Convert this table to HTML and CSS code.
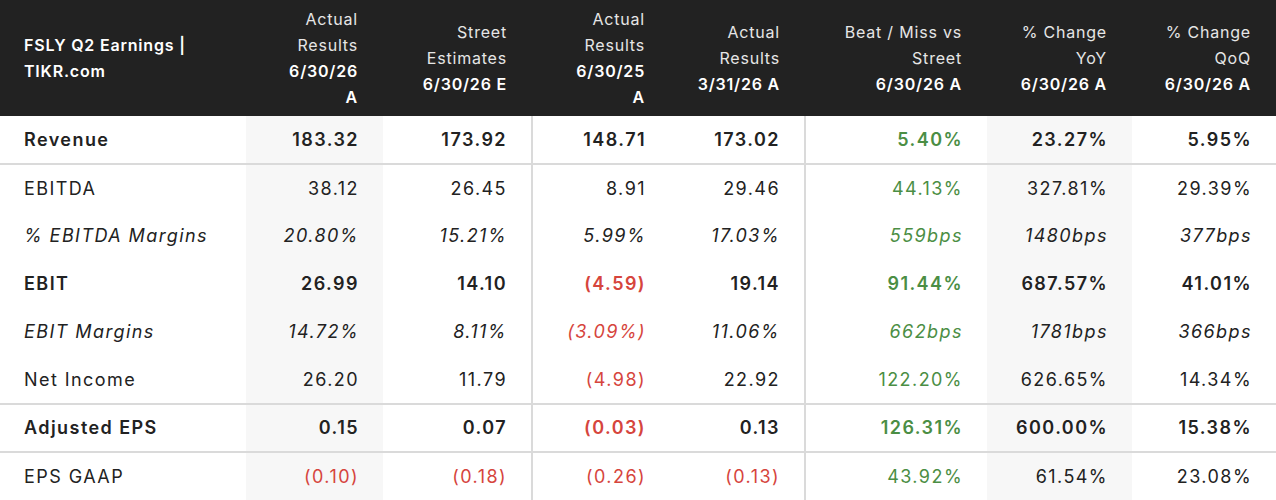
FILE: index.html
```html
<!DOCTYPE html>
<html>
<head>
<meta charset="utf-8">
<link rel="stylesheet" href="styles.css">
</head>
<body>
<table class="earnings">
  <colgroup>
    <col class="c-label">
    <col class="c-1">
    <col class="c-2">
    <col class="c-3">
    <col class="c-4">
    <col class="c-5">
    <col class="c-6">
    <col class="c-7">
  </colgroup>
  <thead>
    <tr>
      <th class="title">FSLY Q2 Earnings |<br>TIKR.com</th>
      <th><span class="sub">Actual<br>Results</span><br><span class="date">6/30/26<br>A</span></th>
      <th class="sep"><span class="sub">Street<br>Estimates</span><br><span class="date">6/30/26 E</span></th>
      <th><span class="sub">Actual<br>Results</span><br><span class="date">6/30/25<br>A</span></th>
      <th class="sep"><span class="sub">Actual<br>Results</span><br><span class="date">3/31/26 A</span></th>
      <th><span class="sub">Beat / Miss vs<br>Street</span><br><span class="date">6/30/26 A</span></th>
      <th><span class="sub">% Change<br>YoY</span><br><span class="date">6/30/26 A</span></th>
      <th><span class="sub">% Change<br>QoQ</span><br><span class="date">6/30/26 A</span></th>
    </tr>
  </thead>
  <tbody>
    <tr class="bold line">
      <td>Revenue</td><td class="shade">183.32</td><td class="sep">173.92</td><td>148.71</td><td class="sep">173.02</td><td class="pos">5.40%</td><td class="shade">23.27%</td><td>5.95%</td>
    </tr>
    <tr>
      <td>EBITDA</td><td class="shade">38.12</td><td class="sep">26.45</td><td>8.91</td><td class="sep">29.46</td><td class="pos">44.13%</td><td class="shade">327.81%</td><td>29.39%</td>
    </tr>
    <tr class="ital">
      <td>% EBITDA Margins</td><td class="shade">20.80%</td><td class="sep">15.21%</td><td>5.99%</td><td class="sep">17.03%</td><td class="pos">559bps</td><td class="shade">1480bps</td><td>377bps</td>
    </tr>
    <tr class="bold">
      <td>EBIT</td><td class="shade">26.99</td><td class="sep">14.10</td><td class="neg">(4.59)</td><td class="sep">19.14</td><td class="pos">91.44%</td><td class="shade">687.57%</td><td>41.01%</td>
    </tr>
    <tr class="ital">
      <td>EBIT Margins</td><td class="shade">14.72%</td><td class="sep">8.11%</td><td class="neg">(3.09%)</td><td class="sep">11.06%</td><td class="pos">662bps</td><td class="shade">1781bps</td><td>366bps</td>
    </tr>
    <tr class="line">
      <td>Net Income</td><td class="shade">26.20</td><td class="sep">11.79</td><td class="neg">(4.98)</td><td class="sep">22.92</td><td class="pos">122.20%</td><td class="shade">626.65%</td><td>14.34%</td>
    </tr>
    <tr class="bold line">
      <td>Adjusted EPS</td><td class="shade">0.15</td><td class="sep">0.07</td><td class="neg">(0.03)</td><td class="sep">0.13</td><td class="pos">126.31%</td><td class="shade">600.00%</td><td>15.38%</td>
    </tr>
    <tr>
      <td>EPS GAAP</td><td class="shade neg">(0.10)</td><td class="sep neg">(0.18)</td><td class="neg">(0.26)</td><td class="sep neg">(0.13)</td><td class="pos">43.92%</td><td class="shade">61.54%</td><td>23.08%</td>
    </tr>
  </tbody>
</table>
</body>
</html>
```

FILE: styles.css
```css
html, body {
  margin: 0;
  padding: 0;
  background: #ffffff;
}

body {
  font-family: Inter, "Noto Sans", "Liberation Sans", sans-serif;
  color: #222222;
}

.earnings {
  width: 1276px;
  border-collapse: collapse;
  table-layout: fixed;
}

.c-label { width: 246px; }
.c-1 { width: 137px; }
.c-2 { width: 149px; }
.c-3 { width: 138px; }
.c-4 { width: 135px; }
.c-5 { width: 182px; }
.c-6 { width: 145px; }
.c-7 { width: 144px; }

.earnings thead th {
  background: #222222;
  height: 116px;
  padding: 0 25px 0 24px;
  font-size: 16px;
  line-height: 26px;
  letter-spacing: 0.05em;
  text-align: right;
  vertical-align: middle;
  font-weight: 400;
  color: #e8e8e8;
  white-space: nowrap;
}

.earnings thead th.title {
  text-align: left;
  font-weight: 600;
  color: #ffffff;
}

.earnings thead .date {
  font-weight: 600;
  color: #ffffff;
}

.earnings thead .sub {
  color: #e6e6e6;
}

.earnings tbody td {
  height: 48px;
  padding: 0 24px 0 24px;
  font-size: 18px;
  line-height: 24px;
  letter-spacing: 0.08em;
  text-align: right;
  vertical-align: middle;
  white-space: nowrap;
  color: #222222;
  box-sizing: border-box;
}

.earnings tbody td:first-child {
  text-align: left;
}

.earnings td.sep {
  border-right: 2px solid #dadada;
}

.earnings td.shade {
  background: #f7f7f7;
}

.earnings tr.line td {
  border-bottom: 2px solid #dadada;
}

.earnings tr.bold td {
  font-weight: 600;
}

.earnings tr.ital td {
  font-style: italic;
}

.earnings td.pos {
  color: #4b8e44;
}

.earnings td.neg {
  color: #d6453d;
}
```
